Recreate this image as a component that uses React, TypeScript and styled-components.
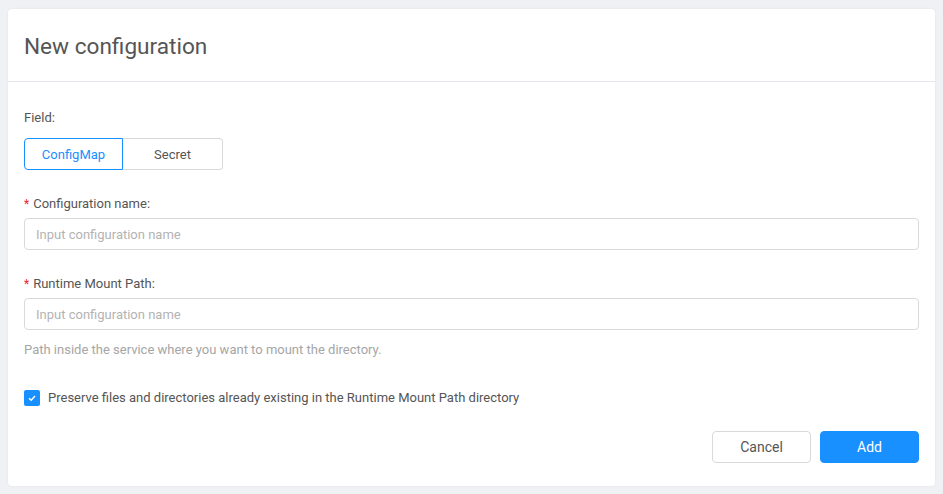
import React, { useState } from "react";
import styled, { createGlobalStyle } from "styled-components";

const Global = createGlobalStyle`
  html, body { margin: 0; padding: 0; }
  body {
    background: #f0f1f5;
    font-family: Roboto, "Noto Sans", sans-serif;
    color: #666;
  }
  * { box-sizing: border-box; }
`;

const Page = styled.div`
  padding: 9px 8px 8px 8px;
`;

const Card = styled.div`
  background: #fff;
  border-radius: 4px;
  box-shadow: 0 0 3px rgba(0, 0, 0, 0.06);
  height: 477px;
  display: flex;
  flex-direction: column;
`;

const Header = styled.div`
  height: 73px;
  border-bottom: 1px solid #e5e6eb;
  display: flex;
  align-items: center;
  padding: 2px 16px 0 16px;
`;

const Title = styled.h1`
  margin: 0;
  font-size: 22.6px;
  font-weight: 400;
  color: #555;
`;

const Body = styled.div`
  padding: 25px 16px 23px 16px;
  display: flex;
  flex-direction: column;
  flex: 1;
`;

const Label = styled.div<{ $mt?: number }>`
  font-size: 13px;
  line-height: 22px;
  color: #555;
  margin-top: ${(p) => p.$mt ?? 0}px;
`;

const Star = styled.span`
  color: #f5222d;
  margin-right: 4px;
  font-size: 12px;
`;

const Segmented = styled.div`
  display: flex;
  margin-top: 9px;
`;

const SegButton = styled.button<{ $active?: boolean; $first?: boolean }>`
  width: ${(p) => (p.$first ? 99 : 100)}px;
  height: 32px;
  font-family: inherit;
  font-size: 13px;
  background: #fff;
  cursor: pointer;
  color: ${(p) => (p.$active ? "#1890ff" : "#555")};
  border: 1px solid ${(p) => (p.$active ? "#1890ff" : "#d9d9d9")};
  border-radius: ${(p) => (p.$first ? "4px 0 0 4px" : "0 4px 4px 0")};
  ${(p) => (!p.$first ? "border-left: none;" : "")}
  padding: 0;
`;

const Input = styled.input`
  margin-top: 3px;
  width: 100%;
  height: 32px;
  border: 1px solid #d9d9d9;
  border-radius: 4px;
  padding: 0 11px;
  font-family: inherit;
  font-size: 13px;
  color: #555;
  outline: none;
  &::placeholder {
    color: #b3b3b3;
  }
`;

const Help = styled.div`
  margin-top: 9px;
  font-size: 13px;
  line-height: 22px;
  color: #a6a6a6;
`;

const CheckRow = styled.label`
  margin-top: 26px;
  display: flex;
  align-items: center;
  gap: 8px;
  font-size: 13px;
  line-height: 22px;
  color: #555;
  cursor: pointer;
`;

const Box = styled.span`
  width: 16px;
  height: 16px;
  border-radius: 2px;
  background: #1890ff;
  display: inline-flex;
  align-items: center;
  justify-content: center;
`;

const Footer = styled.div`
  margin-top: auto;
  display: flex;
  justify-content: flex-end;
  gap: 9px;
`;

const Btn = styled.button<{ $primary?: boolean }>`
  width: 99px;
  height: 32px;
  border-radius: 4px;
  font-family: inherit;
  font-size: 14px;
  cursor: pointer;
  background: ${(p) => (p.$primary ? "#1890ff" : "#fff")};
  color: ${(p) => (p.$primary ? "#fff" : "#555")};
  border: 1px solid ${(p) => (p.$primary ? "#1890ff" : "#d9d9d9")};
`;

export default function App() {
  const [mode, setMode] = useState("ConfigMap");
  return (
    <>
      <Global />
      <Page>
        <Card>
          <Header>
            <Title>New configuration</Title>
          </Header>
          <Body>
            <Label>Field:</Label>
            <Segmented>
              <SegButton $first $active={mode === "ConfigMap"} onClick={() => setMode("ConfigMap")}>
                ConfigMap
              </SegButton>
              <SegButton $active={mode === "Secret"} onClick={() => setMode("Secret")}>
                Secret
              </SegButton>
            </Segmented>
            <Label $mt={23}>
              <Star>*</Star>Configuration name:
            </Label>
            <Input placeholder="Input configuration name" />
            <Label $mt={23}>
              <Star>*</Star>Runtime Mount Path:
            </Label>
            <Input placeholder="Input configuration name" />
            <Help>Path inside the service where you want to mount the directory.</Help>
            <CheckRow>
              <Box>
                <svg width="10" height="10" viewBox="0 0 10 10">
                  <path d="M2 5.2 L4.2 7.2 L8 3" fill="none" stroke="#fff" strokeWidth="1.4" />
                </svg>
              </Box>
              Preserve files and directories already existing in the Runtime Mount Path directory
            </CheckRow>
            <Footer>
              <Btn>Cancel</Btn>
              <Btn $primary>Add</Btn>
            </Footer>
          </Body>
        </Card>
      </Page>
    </>
  );
}
